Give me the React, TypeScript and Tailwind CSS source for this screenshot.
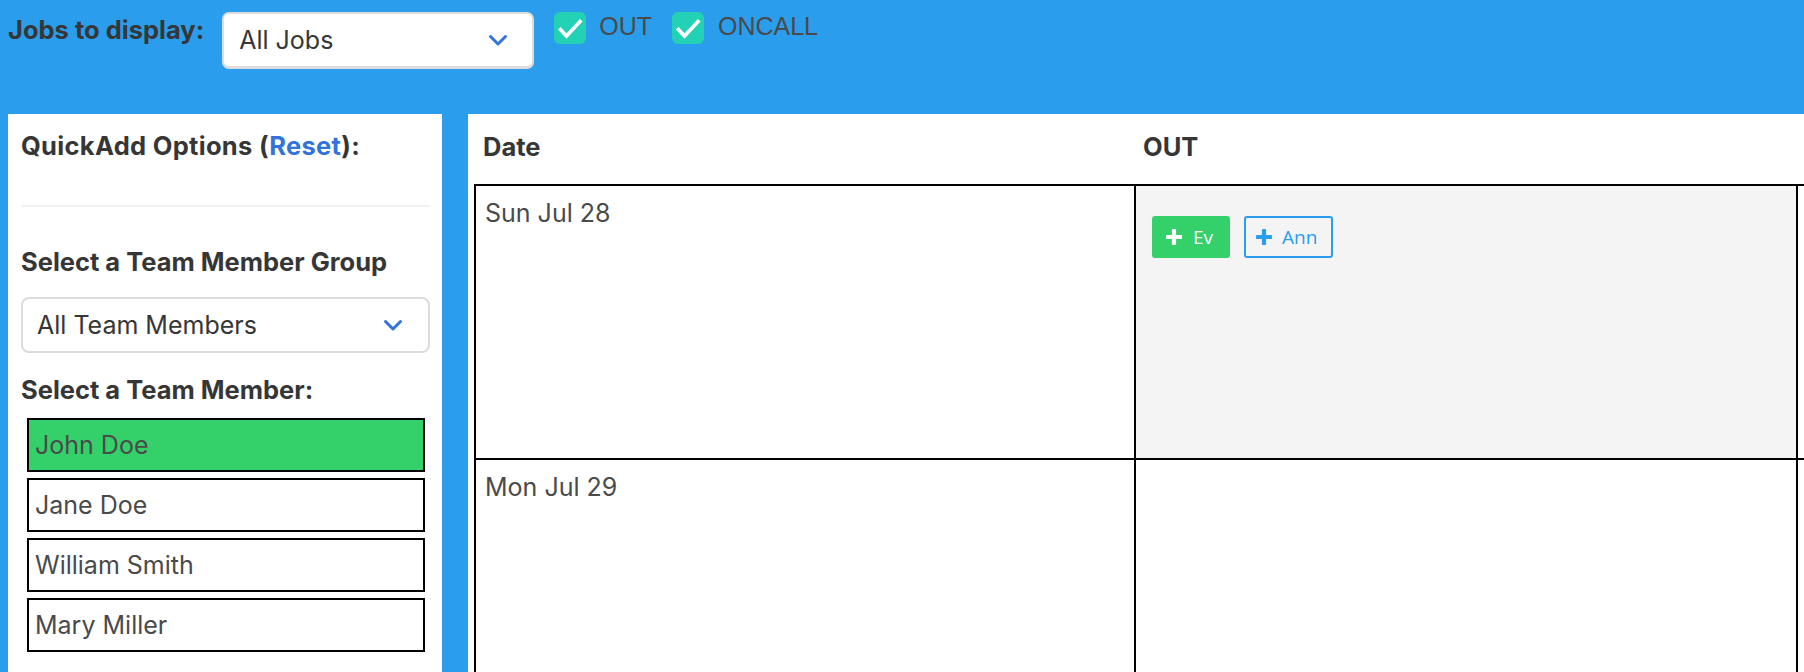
import React from "react";

const Chevron = () => (
  <svg width="20" height="13" viewBox="0 0 20 13" fill="none">
    <polyline points="2.5,2.5 10,10 17.5,2.5" stroke="#3273dc" strokeWidth="3" strokeLinecap="round" strokeLinejoin="round" />
  </svg>
);

const Check = () => (
  <span className="flex h-[32px] w-[32px] shrink-0 items-center justify-center rounded-[6px] bg-[#23d2b5]">
    <svg width="32" height="32" viewBox="0 0 32 32" fill="none">
      <polyline points="6.5,17.5 12.5,24 26,9.5" stroke="#ffffff" strokeWidth="3.6" strokeLinecap="square" strokeLinejoin="miter" />
    </svg>
  </span>
);

const Plus = ({ color }: { color: string }) => (
  <svg width="16" height="16" viewBox="0 0 16 16" fill="none">
    <line x1="8" y1="1.5" x2="8" y2="14.5" stroke={color} strokeWidth="4.2" strokeLinecap="round" />
    <line x1="1.5" y1="8" x2="14.5" y2="8" stroke={color} strokeWidth="4.2" strokeLinecap="round" />
  </svg>
);

const members = ["John Doe", "Jane Doe", "William Smith", "Mary Miller"];

export default function App() {
  const ui = { fontFamily: "Inter, 'Noto Sans', sans-serif" };
  const label = { fontFamily: "'Liberation Sans', Arial, sans-serif" };
  return (
    <div className="h-[672px] w-[1804px] overflow-hidden bg-[#2b9ded]" style={ui}>
      {/* Top bar */}
      <div className="flex h-[114px] items-start px-[8px] pt-[12px]">
        <div className="mt-[3px] text-[25.5px] font-bold leading-[30px] text-[#363636]">Jobs to display:</div>
        <div className="ml-[18px] flex h-[57px] w-[312px] items-center justify-between rounded-[7px] border-2 border-b-[3px] border-[#dcdcdc] bg-white pl-[15px] pr-[24px]">
          <span className="text-[25px] leading-[30px] text-[#363636]">All Jobs</span>
          <Chevron />
        </div>
        <div className="ml-[20px] flex items-center">
          <Check />
          <span className="-mt-[3px] ml-[13px] text-[25px] leading-[29px] text-[#4a4a4a]" style={label}>OUT</span>
        </div>
        <div className="ml-[20px] flex items-center">
          <Check />
          <span className="-mt-[3px] ml-[14px] text-[25px] leading-[29px] text-[#4a4a4a]" style={label}>ONCALL</span>
        </div>
      </div>

      <div className="flex items-start">
        {/* Left panel */}
        <div className="ml-[8px] h-[600px] w-[434px] shrink-0 bg-white pl-[13px] pr-[12px] pt-[17px]">
          <div className="text-[25.5px] font-bold leading-[30px] tracking-[0.3px] text-[#363636]">
            QuickAdd Options (<span className="text-[#3273dc]">Reset</span>):
          </div>
          <div className="mt-[44px] h-[2px] bg-[#f1f1f1]" />
          <div className="mt-[40px] text-[25.5px] font-bold leading-[30px] text-[#363636]">Select a Team Member Group</div>
          <div className="mt-[20px] flex h-[56px] items-center justify-between rounded-[8px] border-2 border-[#dcdcdc] bg-white pl-[14px] pr-[25px]">
            <span className="text-[25px] leading-[30px] text-[#363636]">All Team Members</span>
            <Chevron />
          </div>
          <div className="mt-[22px] text-[25.5px] font-bold leading-[30px] text-[#363636]">Select a Team Member:</div>
          <div className="mt-[13px] flex flex-col gap-[6px] pl-[6px] pr-[5px]">
            {members.map((m, i) => (
              <div
                key={m}
                className={`flex h-[54px] items-center border-2 border-black pl-[6px] text-[25px] leading-[30px] text-[#4a4a4a] ${i === 0 ? "bg-[#34d06a]" : "bg-white"}`}
              >
                {m}
              </div>
            ))}
          </div>
        </div>

        {/* Main panel */}
        <div className="ml-[26px] h-[600px] flex-1 overflow-hidden bg-white pl-[6px]">
          <div className="grid w-[1922px] grid-cols-[660px_662px_600px]">
            <div className="h-[70px] pl-[9px] pt-[18px] text-[25.5px] font-bold leading-[30px] text-[#363636]">Date</div>
            <div className="h-[70px] pl-[9px] pt-[18px] text-[25.5px] font-bold leading-[30px] text-[#363636]">OUT</div>
            <div className="h-[70px]" />
          </div>
          <div className="grid w-[1922px] grid-cols-[660px_662px_600px] border-l-2 border-t-2 border-black">
            <div className="h-[274px] border-b-2 border-r-2 border-black pl-[9px] pt-[12px] text-[25px] leading-[30px] text-[#4a4a4a]">Sun Jul 28</div>
            <div className="flex h-[274px] items-start gap-[14px] border-b-2 border-r-2 border-black bg-[#f4f4f4] pl-[16px] pt-[30px]" style={{ fontFamily: "'Open Sans', 'Noto Sans', sans-serif" }}>
              <div className="flex h-[42px] items-center rounded-[3px] bg-[#34d06a] pl-[14px] pr-[17px] text-[19px] text-white">
                <Plus color="#ffffff" />
                <span className="ml-[11px] leading-none">Ev</span>
              </div>
              <div className="flex h-[42px] items-center rounded-[3px] border-2 border-[#2b9ded] pl-[10px] pr-[14px] text-[19px] text-[#2b9ded]">
                <Plus color="#2b9ded" />
                <span className="ml-[10px] leading-none">Ann</span>
              </div>
            </div>
            <div className="h-[274px] border-b-2 border-r-2 border-black" />
            <div className="h-[274px] border-b-2 border-r-2 border-black pl-[9px] pt-[12px] text-[25px] leading-[30px] text-[#4a4a4a]">Mon Jul 29</div>
            <div className="h-[274px] border-b-2 border-r-2 border-black" />
            <div className="h-[274px] border-b-2 border-r-2 border-black" />
          </div>
        </div>
      </div>
    </div>
  );
}
